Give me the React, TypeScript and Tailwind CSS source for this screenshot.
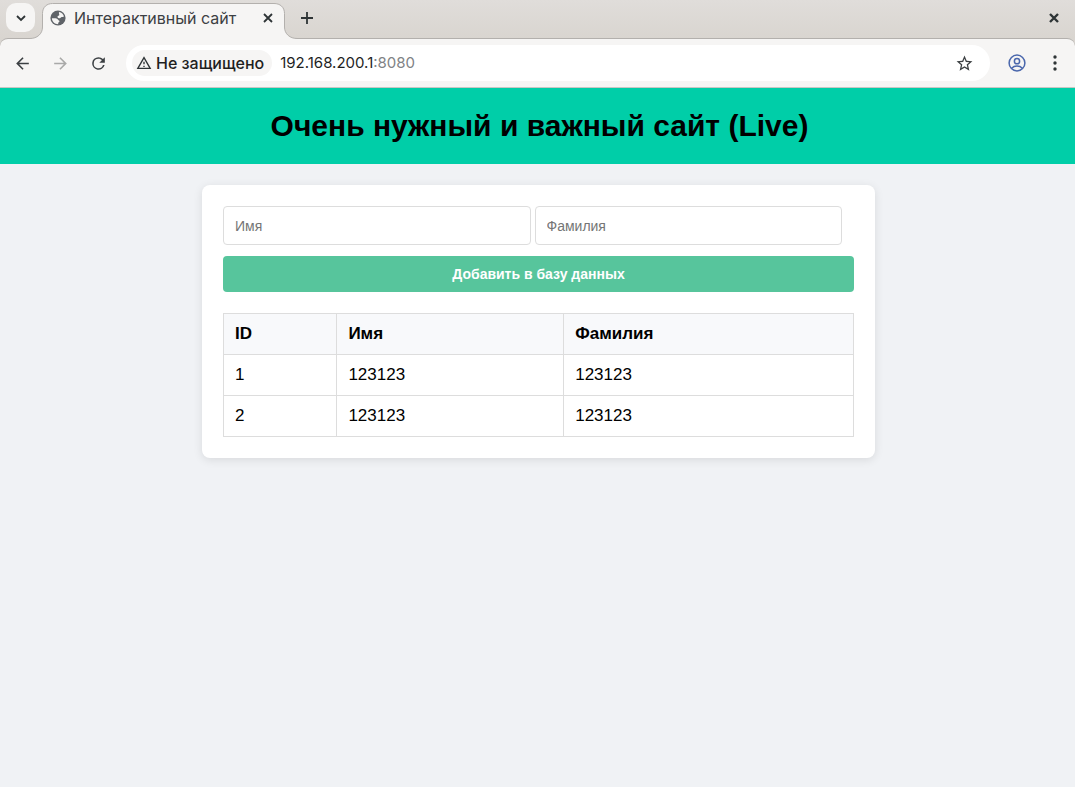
import { useState, type FormEvent } from 'react';

type Person = { id: number; name: string; surname: string };

const initialPeople: Person[] = [
  { id: 1, name: '123123', surname: '123123' },
  { id: 2, name: '123123', surname: '123123' },
];

function GlobeIcon() {
  return (
    <svg viewBox="0 0 16 16" className="size-4 shrink-0" aria-hidden="true">
      <circle cx="8" cy="8" r="7.6" fill="#5f6368" />
      <path
        fill="#f6f5f4"
        d="M9 1.9c2.5.4 4.5 2.200 5 4.700-.8.6-1.500.4-2.200.4-1 0-.9 1.200-2 1.200C8.600 8.200 7.500 7.800 7.500 6.700c0-1.200 1.800-.8 1.800-2 0-1-.6-1.100-.3-2.800z"
      />
      <path
        fill="#f6f5f4"
        d="M1.900 8.200h3.600c1.500 0 2 .8 2.600 1.500.5.7 1.400.6 1.400 1.600s-1.300.9-1.300 1.900v1C4.700 14 1.900 11.500 1.900 8.200z"
      />
    </svg>
  );
}

/** Outline of the active tab, with the flared feet that run into the toolbar */
function TabShape() {
  return (
    <svg viewBox="0 0 267 36" className="absolute -left-3 top-0 h-9 w-[267px]" aria-hidden="true">
      <path
        d="M0 35.5C7 35.5 12.500 31 12.500 24V10.500C12.500 4 17 .5 22.500 .5H244C250 .5 254.500 4 254.500 10.500V24C254.500 31 260 35.500 267 35.500V36H0Z"
        fill="#f6f5f4"
      />
      <path
        d="M0 35.5C7 35.5 12.500 31 12.500 24V10.500C12.500 4 17 .5 22.500 .5H244C250 .5 254.500 4 254.500 10.500V24C254.500 31 260 35.500 267 35.500"
        fill="none"
        stroke="#b3b0ad"
      />
    </svg>
  );
}

function TabStrip() {
  return (
    <div className="flex h-[38px] items-end bg-linear-to-b from-[#e0ddda] to-[#d9d5d0] pl-1.5">
      <button aria-label="Поиск вкладок" className="mb-1.5 flex size-[29px] items-center justify-center rounded-[10px] bg-[#f6f5f4]">
        <svg viewBox="0 0 10 10" className="size-2.5" fill="none" stroke="#2e3436" strokeWidth="1.8" aria-hidden="true">
          <path d="M1 3l4 4 4-4" />
        </svg>
      </button>
      <div className="relative ml-[7px] h-[35px] w-[243px]">
        <TabShape />
        <div className="relative flex h-[30px] items-center pl-2 pr-3">
          <GlobeIcon />
          <span className="ml-2 flex-1 truncate text-base text-[#3c4043]">Интерактивный сайт</span>
          <button aria-label="Закрыть вкладку">
            <svg viewBox="0 0 10 10" className="size-2.5" stroke="#2e3436" strokeWidth="1.8" aria-hidden="true">
              <path d="M1 1l8 8M9 1l-8 8" />
            </svg>
          </button>
        </div>
      </div>
      <button aria-label="Новая вкладка" className="mb-[14px] ml-4">
        <svg viewBox="0 0 12 12" className="size-3" stroke="#2e3436" strokeWidth="1.8" aria-hidden="true">
          <path d="M6 0v12M0 6h12" />
        </svg>
      </button>
      <button aria-label="Закрыть окно" className="mb-[15px] ml-auto mr-4">
        <svg viewBox="0 0 10 10" className="size-2.5" stroke="#2e3436" strokeWidth="2.4" aria-hidden="true">
          <path d="M1 1l8 8M9 1l-8 8" />
        </svg>
      </button>
    </div>
  );
}

function Toolbar() {
  return (
    <div className="flex h-[50px] items-center rounded-t-lg border-y border-t-[#b3b0ad] border-b-[#c9c7c4] bg-[#f6f5f4] pl-[13px] pr-[11px]">
      <button aria-label="Назад">
        <svg viewBox="0 0 24 24" className="size-[19px]" fill="#3c4043" aria-hidden="true">
          <path d="M20 11H7.830l5.590-5.590L12 4l-8 8 8 8 1.410-1.410L7.830 13H20z" />
        </svg>
      </button>
      <button aria-label="Вперёд" className="ml-[19px]">
        <svg viewBox="0 0 24 24" className="size-[19px]" fill="#a9a9a8" aria-hidden="true">
          <path d="M12 4l-1.410 1.410L16.170 11H4v2h12.170l-5.580 5.590L12 20l8-8z" />
        </svg>
      </button>
      <button aria-label="Обновить" className="ml-[19px]">
        <svg viewBox="0 0 24 24" className="size-[19px]" fill="#3c4043" aria-hidden="true">
          <path d="M17.650 6.350A7.960 7.960 0 0 0 12 4a8 8 0 1 0 7.730 10h-2.080A6 6 0 1 1 12 6c1.660 0 3.140.69 4.220 1.780L13 11h7V4z" />
        </svg>
      </button>
      <div className="ml-[18px] flex h-9 flex-1 items-center rounded-full bg-white pl-1.5 pr-4">
        <button className="flex h-[26px] items-center rounded-full bg-[#f6f5f4] pl-1 pr-2 text-base font-medium text-[#1f1f1f]">
          <svg viewBox="0 0 24 24" className="size-4" fill="#2e3436" aria-hidden="true">
            <path d="M12 5.990L19.530 19H4.470zM12 2L1 21h22zm1 14h-2v2h2zm0-6h-2v4h2z" />
          </svg>
          <span className="ml-1">Не защищено</span>
        </button>
        <a href="#" className="ml-2 flex-1 text-[15px] text-[#1f1f1f]">
          192.168.200.1<span className="text-[#808285]">:8080</span>
        </a>
        <button aria-label="Добавить в закладки">
          <svg viewBox="0 0 24 24" className="size-[19px]" fill="#3c4043" aria-hidden="true">
            <path d="M22 9.240l-7.190-.62L12 2 9.190 8.630 2 9.240l5.460 4.730L5.820 21 12 17.270 18.180 21l-1.630-7.030zM12 15.400l-3.760 2.270 1-4.280-3.320-2.880 4.380-.38L12 6.100l1.710 4.040 4.380.38-3.320 2.880 1 4.280z" />
          </svg>
        </button>
      </div>
      <button aria-label="Профиль" className="ml-[18px]">
        <svg viewBox="0 0 18 18" className="size-[18px]" fill="none" stroke="#4a67ac" strokeWidth="1.5" aria-hidden="true">
          <circle cx="9" cy="9" r="7.9" />
          <circle cx="9" cy="7.2" r="2.6" />
          <path d="M3.600 14.300c1.500-1.500 3.300-2.200 5.400-2.200s3.900.7 5.400 2.200" />
        </svg>
      </button>
      <button aria-label="Меню" className="ml-5">
        <svg viewBox="0 0 18 18" className="size-[18px]" fill="#2e3436" aria-hidden="true">
          <circle cx="9" cy="3" r="1.7" />
          <circle cx="9" cy="9" r="1.7" />
          <circle cx="9" cy="15" r="1.7" />
        </svg>
      </button>
    </div>
  );
}

const inputClass =
  'h-[39px] min-w-0 flex-1 rounded border border-[#ddd] bg-white px-[11px] text-sm outline-none placeholder:text-[#757575]';
const cellClass = 'h-[41px] border border-[#ddd] px-[11px] text-left';

function App() {
  const [people, setPeople] = useState(initialPeople);
  const [name, setName] = useState('');
  const [surname, setSurname] = useState('');

  const onSubmit = (e: FormEvent) => {
    e.preventDefault();
    if (!name || !surname) return;
    setPeople((list) => [...list, { id: list.length + 1, name, surname }]);
    setName('');
    setSurname('');
  };

  return (
    <div className="flex min-h-screen flex-col bg-[#f0f2f5] font-['Liberation_Sans',Arial,sans-serif] text-black">
      <div className="bg-[#d9d5d0] font-['Inter',sans-serif]">
        <TabStrip />
        <Toolbar />
      </div>
      <header className="flex h-[76px] items-center justify-center bg-[#00cea8] pb-0.5 pl-1">
        <h1 className="text-[30px] font-bold">Очень нужный и важный сайт (Live)</h1>
      </header>
      <main className="pl-0.5 pt-[21px]">
        <div className="mx-auto max-w-[673px] rounded-lg bg-white p-[21px] shadow-[0_2px_10px_rgba(0,0,0,0.1)]">
          <form onSubmit={onSubmit}>
            <div className="flex gap-1 pr-3">
              <input
                aria-label="Имя"
                placeholder="Имя"
                value={name}
                onChange={(e) => setName(e.target.value)}
                className={inputClass}
              />
              <input
                aria-label="Фамилия"
                placeholder="Фамилия"
                value={surname}
                onChange={(e) => setSurname(e.target.value)}
                className={inputClass}
              />
            </div>
            <button type="submit" className="mt-[11px] h-9 w-full rounded bg-[#57c59c] text-sm font-bold text-white">
              Добавить в базу данных
            </button>
          </form>
          <table className="mt-[21px] w-full border-collapse text-[17px]">
            <thead>
              <tr className="bg-[#f8f9fb]">
                <th className={`${cellClass} w-[18%]`}>ID</th>
                <th className={`${cellClass} w-[36%]`}>Имя</th>
                <th className={cellClass}>Фамилия</th>
              </tr>
            </thead>
            <tbody>
              {people.map((p) => (
                <tr key={p.id}>
                  <td className={cellClass}>{p.id}</td>
                  <td className={cellClass}>{p.name}</td>
                  <td className={cellClass}>{p.surname}</td>
                </tr>
              ))}
            </tbody>
          </table>
        </div>
      </main>
    </div>
  );
}

export default App;
